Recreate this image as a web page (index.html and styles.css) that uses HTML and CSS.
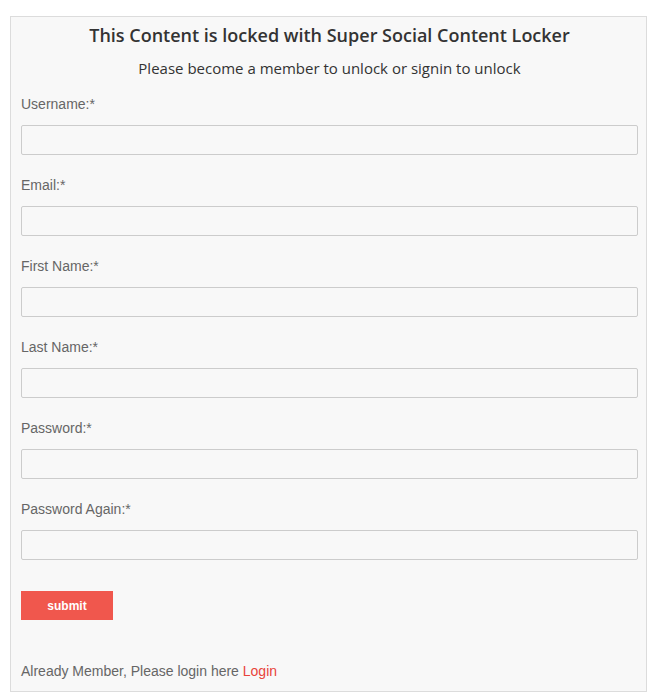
FILE: index.html
```html
<!DOCTYPE html>
<html>
<head>
<meta charset="utf-8">
<link rel="stylesheet" href="styles.css">
</head>
<body>
<div class="locker">
  <h2 class="title">This Content is locked with Super Social Content Locker</h2>
  <p class="subtitle">Please become a member to unlock or signin to unlock</p>
  <form class="form">
    <div class="field"><label>Username:*</label><input type="text"></div>
    <div class="field"><label>Email:*</label><input type="text"></div>
    <div class="field"><label>First Name:*</label><input type="text"></div>
    <div class="field"><label>Last Name:*</label><input type="text"></div>
    <div class="field"><label>Password:*</label><input type="password"></div>
    <div class="field"><label>Password Again:*</label><input type="password"></div>
    <button type="button" class="submit">submit</button>
  </form>
  <p class="login">Already Member, Please login here <a href="#">Login</a></p>
</div>
</body>
</html>
```
FILE: styles.css
```css
html, body {
  margin: 0;
  padding: 0;
  background: #ffffff;
}
body {
  padding: 16px 21px 0 10px;
}
.locker {
  width: 637px;
  box-sizing: border-box;
  height: 676px;
  border: 1px solid #dcdcdc;
  background: #f8f8f8;
  padding: 0 8px 0 10px;
  font-family: "Liberation Sans", Arial, sans-serif;
}
.title {
  margin: 0;
  padding-top: 6px;
  font-family: "Open Sans", sans-serif;
  font-weight: 600;
  font-size: 18px;
  line-height: 24px;
  color: #333333;
  text-align: center;
}
.subtitle {
  margin: 11px 0 0;
  font-family: "Open Sans", sans-serif;
  font-size: 15px;
  line-height: 20px;
  color: #333333;
  text-align: center;
}
.form {
  display: flex;
  flex-direction: column;
  margin-top: 18px;
}
.field {
  display: flex;
  flex-direction: column;
  gap: 12px;
  margin-bottom: 22px;
}
.field:nth-child(n+5) {
  margin-top: 0;
}
.field label {
  font-size: 14px;
  line-height: 17px;
  color: #666666;
}
.field input {
  box-sizing: border-box;
  width: 100%;
  height: 30px;
  margin: 0;
  border: 1px solid #cccccc;
  border-radius: 2px;
  background: #f8f8f8;
}
.submit {
  align-self: flex-start;
  width: 92px;
  height: 29px;
  margin-top: 9px;
  border: none;
  background: #f0574d;
  color: #ffffff;
  font-family: "Liberation Sans", Arial, sans-serif;
  font-weight: bold;
  font-size: 12px;
  padding: 0;
}
.login {
  margin: 43px 0 0;
  font-size: 14px;
  line-height: 17px;
  color: #666666;
}
.login a {
  color: #e8433a;
  text-decoration: none;
}
```
